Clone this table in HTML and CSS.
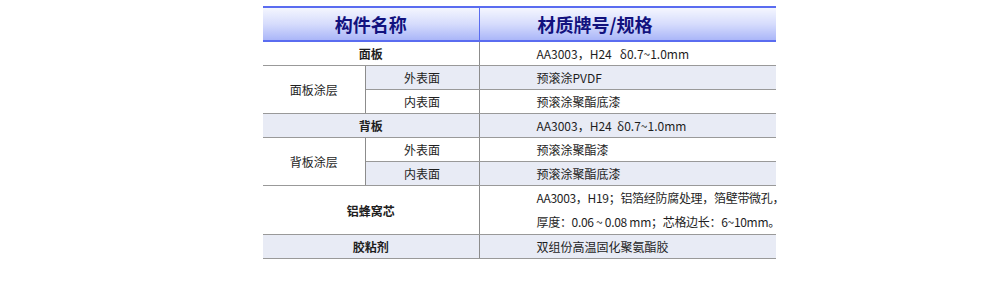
FILE: index.html
```html
<!DOCTYPE html>
<html lang="zh">
<head>
<meta charset="utf-8">
<title>构件名称</title>
<link rel="stylesheet" href="styles.css">
</head>
<body>
<table class="spec">
  <colgroup>
    <col class="c1"><col class="c2"><col class="c3">
  </colgroup>
  <thead>
    <tr>
      <th colspan="2" class="h-name">构件名称</th>
      <th class="h-val">材质牌号/规格</th>
    </tr>
  </thead>
  <tbody>
    <tr>
      <td colspan="2" class="name b">面板</td>
      <td class="val">AA3003，H24&nbsp;&nbsp; δ0.7~1.0mm</td>
    </tr>
    <tr class="alt">
      <td rowspan="2" class="name group">面板涂层</td>
      <td class="name sub">外表面</td>
      <td class="val">预滚涂PVDF</td>
    </tr>
    <tr>
      <td class="name sub">内表面</td>
      <td class="val">预滚涂聚酯底漆</td>
    </tr>
    <tr class="alt">
      <td colspan="2" class="name b">背板</td>
      <td class="val">AA3003，H24&nbsp; δ0.7~1.0mm</td>
    </tr>
    <tr>
      <td rowspan="2" class="name group">背板涂层</td>
      <td class="name sub">外表面</td>
      <td class="val">预滚涂聚酯漆</td>
    </tr>
    <tr class="alt">
      <td class="name sub">内表面</td>
      <td class="val">预滚涂聚酯底漆</td>
    </tr>
    <tr class="tall">
      <td colspan="2" class="name b">铝蜂窝芯</td>
      <td class="val two">AA3003，H19；铝箔经防腐处理，箔壁带微孔，<br>厚度：0.06 ~ 0.08 mm；芯格边长：6~10mm。</td>
    </tr>
    <tr class="alt">
      <td colspan="2" class="name b">胶粘剂</td>
      <td class="val">双组份高温固化聚氨酯胶</td>
    </tr>
  </tbody>
</table>
</body>
</html>
```

FILE: styles.css
```css
html, body {
  margin: 0;
  padding: 0;
  background: #ffffff;
}

body {
  padding-top: 6px;
  font-family: "Noto Sans CJK SC", "Noto Sans", sans-serif;
  color: #1e1e1e;
}

.spec {
  margin-left: 263px;
  width: 513px;
  border-collapse: collapse;
  table-layout: fixed;
  font-size: 12px;
}

.c1 { width: 102px; }
.c2 { width: 114px; }
.c3 { width: 297px; }

.spec th {
  height: 32px;
  padding: 0;
  border-top: 2px solid #5a6cf0;
  border-bottom: 2px solid #5a6cf0;
  background: linear-gradient(to bottom, #f4f6fe 0%, #d6dcfc 50%, #aab6f8 100%);
  color: #12127e;
  font-size: 18px;
  font-weight: bold;
  line-height: 30px;
}

.spec th.h-name {
  text-align: center;
  border-right: 1px solid #5a6cf0;
}

.spec th.h-val {
  text-align: left;
  padding-left: 58px;
}

.spec td {
  height: 23px;
  padding: 0;
  line-height: 23px;
  border-bottom: 1px solid #999999;
  background: #ffffff;
}

.spec tr.alt td {
  background: #e8ebf5;
}

.spec td.name {
  text-align: center;
  border-right: 1px solid #8c8c8c;
}

.spec td.b {
  font-weight: bold;
}

.spec tr.alt td.group,
.spec td.group {
  background: #ffffff;
}

.spec td.val {
  padding-left: 57px;
  white-space: nowrap;
}

.spec td.two {
  height: 47px;
  line-height: 24px;
  letter-spacing: -0.3px;
}
```
